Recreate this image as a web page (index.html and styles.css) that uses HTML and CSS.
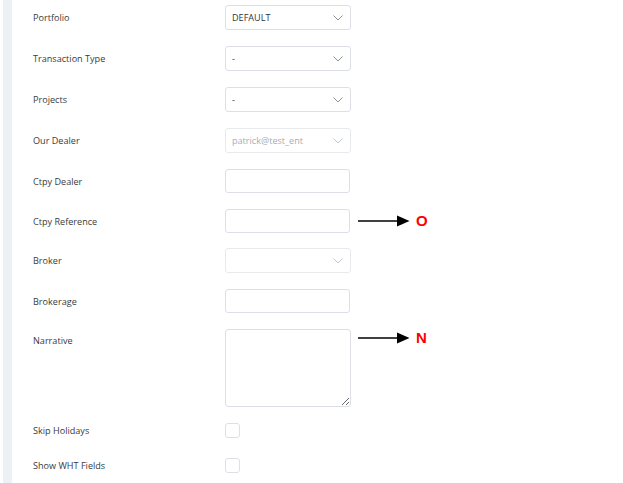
FILE: index.html
```html
<!DOCTYPE html>
<html lang="en">
<head>
    <meta charset="UTF-8">
    <meta name="viewport" content="width=device-width, initial-scale=1.0">
    <title>Trade Details</title>
    <link rel="stylesheet" href="styles.css">
</head>
<body>
    <div class="page">
        <div class="rail"></div>
        <div class="form">
            <div class="row">
                <label class="field-label">Portfolio</label>
                <div class="select"><span>DEFAULT</span><svg class="chev" width="10" height="6" viewBox="0 0 10 6"><polyline points="0.5,0.5 5,5 9.5,0.5"/></svg></div>
            </div>
            <div class="row">
                <label class="field-label">Transaction Type</label>
                <div class="select"><span>-</span><svg class="chev" width="10" height="6" viewBox="0 0 10 6"><polyline points="0.5,0.5 5,5 9.5,0.5"/></svg></div>
            </div>
            <div class="row">
                <label class="field-label">Projects</label>
                <div class="select"><span>-</span><svg class="chev" width="10" height="6" viewBox="0 0 10 6"><polyline points="0.5,0.5 5,5 9.5,0.5"/></svg></div>
            </div>
            <div class="row">
                <label class="field-label">Our Dealer</label>
                <div class="select disabled"><span>patrick@test_ent</span><svg class="chev" width="10" height="6" viewBox="0 0 10 6"><polyline points="0.5,0.5 5,5 9.5,0.5"/></svg></div>
            </div>
            <div class="row">
                <label class="field-label">Ctpy Dealer</label>
                <input class="text-input" type="text">
            </div>
            <div class="row">
                <label class="field-label">Ctpy Reference</label>
                <input class="text-input" type="text">
                <div class="note">
                    <svg class="arrow" width="52" height="12" viewBox="0 0 52 12"><line x1="0" y1="6" x2="40" y2="6"/><polygon points="39,0.5 51.5,6 39,11.5"/></svg>
                    <span class="note-letter">O</span>
                </div>
            </div>
            <div class="row row-tight">
                <label class="field-label">Broker</label>
                <div class="select disabled"><span></span><svg class="chev" width="10" height="6" viewBox="0 0 10 6"><polyline points="0.5,0.5 5,5 9.5,0.5"/></svg></div>
            </div>
            <div class="row">
                <label class="field-label">Brokerage</label>
                <input class="text-input" type="text">
            </div>
            <div class="row row-top">
                <label class="field-label">Narrative</label>
                <textarea class="textarea"></textarea>
                <div class="note">
                    <svg class="arrow" width="52" height="12" viewBox="0 0 52 12"><line x1="0" y1="6" x2="40" y2="6"/><polygon points="39,0.5 51.5,6 39,11.5"/></svg>
                    <span class="note-letter">N</span>
                </div>
            </div>
            <div class="row row-check">
                <label class="field-label">Skip Holidays</label>
                <span class="checkbox"></span>
            </div>
            <div class="row row-check">
                <label class="field-label">Show WHT Fields</label>
                <span class="checkbox"></span>
            </div>
        </div>
    </div>
</body>
</html>
```
FILE: styles.css
```css
body {
    margin: 0;
    background: #fff;
    font-family: 'Open Sans', 'Noto Sans', sans-serif;
    font-size: 9.1px;
    color: #333;
    overflow: hidden;
}

.page {
    display: flex;
    min-height: 483px;
}

.rail {
    width: 9px;
    margin-left: 3px;
    background: #edf0f4; /* side panel edge */
}

.form {
    display: flex;
    flex-direction: column;
    gap: 16px;
    padding: 5px 0 0 21px;
}

.row {
    display: grid;
    grid-template-columns: 192px 126px auto;
    align-items: center;
}

.row-tight {
    margin-top: -1px;
}

.row-top {
    align-items: start;
}

.row-top .field-label {
    padding-top: 5px;
}

.row-check + .row-check {
    margin-top: 4px;
}

.field-label {
    color: #3a3a3a;
    line-height: 14px;
    padding-top: 1px;
}

.select {
    height: 25px;
    box-sizing: border-box;
    border: 1px solid #dcdfe6;
    border-radius: 3px;
    display: flex;
    align-items: center;
    justify-content: space-between;
    padding: 0 7px 0 6px;
    color: #333;
}

.chev polyline {
    fill: none;
    stroke: #8c939d;
    stroke-width: 1;
}

.select.disabled {
    border-color: #e8eaee;
    color: #a8adb5;
}

.select.disabled .chev polyline {
    stroke: #c3c7ce;
}

.text-input {
    width: 125px;
    height: 24px;
    box-sizing: border-box;
    border: 1px solid #dcdfe6;
    border-radius: 3px;
    margin: 0;
    padding: 0 6px;
    font: inherit;
    outline: none;
}

.textarea {
    width: 126px;
    height: 78px;
    box-sizing: border-box;
    border: 1px solid #dcdfe6;
    border-radius: 3px;
    margin: 0;
    padding: 4px 6px;
    font: inherit;
    resize: vertical;
    display: block;
    outline: none;
}

.checkbox {
    display: block;
    width: 15px;
    height: 15px;
    box-sizing: border-box;
    border: 1px solid #dcdfe6;
    border-radius: 3px;
}

.note {
    display: flex;
    align-items: center;
    gap: 6px;
    margin-left: 7px;
}

.arrow line {
    stroke: #000;
    stroke-width: 1.5;
}

.arrow polygon {
    fill: #000;
}

.note-letter {
    font-family: 'Liberation Sans', Arial, sans-serif;
    font-weight: bold;
    font-size: 15px;
    color: #f00;
    line-height: 18px;
}
```
